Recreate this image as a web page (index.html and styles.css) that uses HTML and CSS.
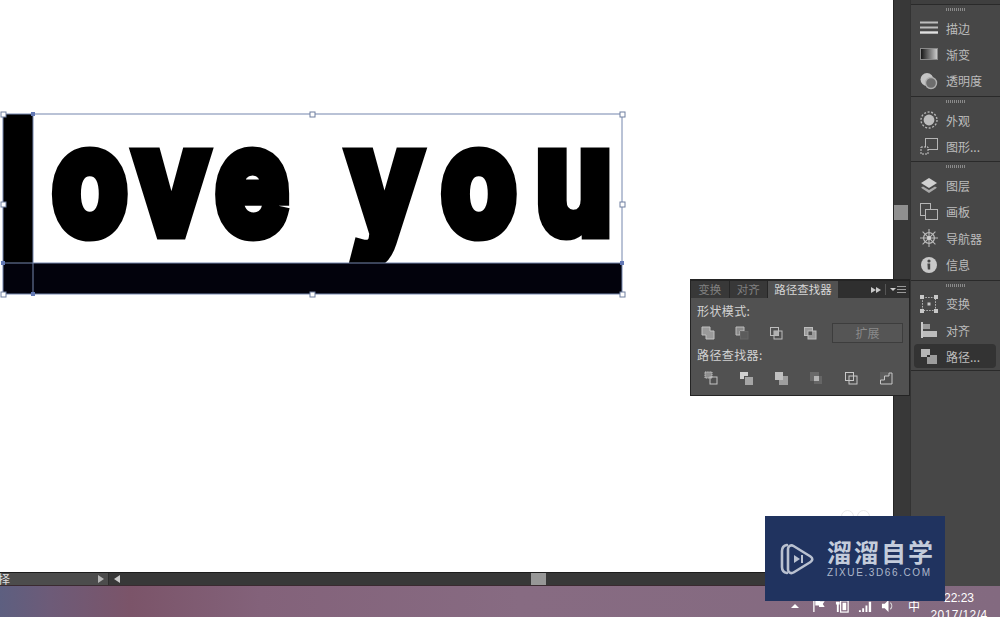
FILE: index.html
```html
<!DOCTYPE html>
<html lang="zh-CN">
<head>
  <meta charset="UTF-8" />
  <meta name="viewport" content="width=device-width, initial-scale=1.0" />
  <title>路径查找器</title>
  <link rel="stylesheet" href="styles.css">
</head>
<body>
  <!-- icon sheet -->
  <svg class="sheet" width="0" height="0">
    <symbol id="i-stroke" viewBox="0 0 18 18"><path d="M0 3.5h18M0 8.5h18" stroke="#bdbdbd" stroke-width="2"/><path d="M0 13.5h18" stroke="#e0e0e0" stroke-width="2.4"/></symbol>
    <linearGradient id="grad"><stop offset="0" stop-color="#111"/><stop offset="1" stop-color="#cfcfcf"/></linearGradient>
    <symbol id="i-gradient" viewBox="0 0 18 18"><rect x=".5" y="3.5" width="17" height="11" fill="url(#grad)" stroke="#8a8a8a"/></symbol>
    <symbol id="i-opacity" viewBox="0 0 18 18"><circle cx="7" cy="7.5" r="6.5" fill="#c4c4c4"/><circle cx="11" cy="11" r="5.5" fill="#6e6e6e" stroke="#b0b0b0" stroke-width="1.4"/></symbol>
    <symbol id="i-appearance" viewBox="0 0 18 18"><circle cx="9" cy="9" r="8" fill="none" stroke="#b5b5b5" stroke-width="1.4" stroke-dasharray="2 1.6"/><circle cx="9" cy="9" r="5.4" fill="#bdbdbd"/></symbol>
    <symbol id="i-styles" viewBox="0 0 18 18"><rect x="5.5" y="1.5" width="12" height="11" fill="none" stroke="#b5b5b5"/><rect x="1" y="10" width="7" height="7" fill="#474747" stroke="#c8c8c8" stroke-dasharray="2 1"/></symbol>
    <symbol id="i-layers" viewBox="0 0 18 18"><path d="M9 1l8 5-8 5-8-5z" fill="#d0d0d0"/><path d="M3 9.4L9 13l6-3.6 2 1.4-8 5.2-8-5.2z" fill="#a8a8a8"/></symbol>
    <symbol id="i-artboard" viewBox="0 0 18 18"><rect x=".5" y=".5" width="10" height="12" fill="none" stroke="#b5b5b5"/><rect x="5.5" y="6.5" width="12" height="10" fill="#474747" stroke="#b5b5b5"/></symbol>
    <symbol id="i-nav" viewBox="0 0 18 18"><g fill="none" stroke="#b8b8b8"><circle cx="9" cy="9" r="5.4" stroke-width="1.3"/><path d="M9 0v18M0 9h18M2.6 2.6l12.8 12.8M15.4 2.6L2.6 15.4" stroke-width="1.1"/></g><circle cx="9" cy="9" r="2" fill="#d0d0d0"/></symbol>
    <symbol id="i-info" viewBox="0 0 18 18"><circle cx="9" cy="9" r="8" fill="#c8c8c8"/><circle cx="9" cy="5" r="1.6" fill="#474747"/><path d="M7.4 7.6h2.8v6h-2.4" fill="#474747"/></symbol>
    <symbol id="i-transform" viewBox="0 0 18 18"><rect x="2.5" y="2.5" width="13" height="13" fill="none" stroke="#b5b5b5" stroke-dasharray="1.6 1.2"/><path d="M0 0h4v4H0zM14 0h4v4h-4zM0 14h4v4H0zM14 14h4v4h-4z" fill="#c8c8c8"/><rect x="7.5" y="7.5" width="3" height="3" fill="#c8c8c8"/></symbol>
    <symbol id="i-align" viewBox="0 0 18 18"><rect x="1" y="1" width="2" height="16" fill="#c8c8c8"/><rect x="3" y="3" width="7" height="5" fill="#9a9a9a"/><rect x="3" y="10" width="14" height="6" fill="#bdbdbd"/></symbol>
    <symbol id="i-path" viewBox="0 0 18 18"><rect x="1" y="2" width="9" height="8" fill="#b5b5b5"/><rect x="7" y="8" width="10" height="9" fill="#9c9c9c"/><rect x="7" y="8" width="3" height="2" fill="#2e2e2e"/></symbol>

    <symbol id="p-unite" viewBox="0 0 14 14"><path d="M1 1h8v4h4v8H5V9H1z" fill="#9a9a9a" stroke="#c2c2c2"/></symbol>
    <symbol id="p-minus" viewBox="0 0 14 14"><path d="M1 1h8v4H5v4H1z" fill="#8a8a8a" stroke="#bdbdbd"/><rect x="5.5" y="5.5" width="7.5" height="7.5" fill="#5c5c5c" stroke="#666"/></symbol>
    <symbol id="p-intersect" viewBox="0 0 14 14"><rect x="1.5" y="1.5" width="8" height="8" fill="none" stroke="#bdbdbd"/><rect x="5" y="5" width="8" height="8" fill="none" stroke="#bdbdbd"/><rect x="5" y="5" width="4.5" height="4.5" fill="#b0b0b0"/></symbol>
    <symbol id="p-exclude" viewBox="0 0 14 14"><rect x="1.5" y="1.5" width="8" height="8" fill="#9a9a9a" stroke="#bdbdbd"/><rect x="5" y="5" width="8" height="8" fill="#9a9a9a" stroke="#bdbdbd"/><rect x="5.5" y="5.5" width="3.5" height="3.5" fill="#515151"/></symbol>
    <symbol id="p-divide" viewBox="0 0 14 14"><rect x="1" y="1" width="7" height="6" fill="#8f8f8f" stroke="#c4c4c4" stroke-dasharray="1.5 .7"/><rect x="6" y="6" width="7" height="7" fill="none" stroke="#c4c4c4"/></symbol>
    <symbol id="p-trim" viewBox="0 0 14 14"><path d="M1 1h8v4H5v3H1z" fill="#d0d0d0"/><rect x="6" y="6" width="8" height="8" fill="#a5a5a5"/></symbol>
    <symbol id="p-merge" viewBox="0 0 14 14"><rect x="1" y="1" width="8" height="8" fill="#c0c0c0"/><path d="M9 5h5v9H5V9h4z" fill="#9e9e9e"/></symbol>
    <symbol id="p-crop" viewBox="0 0 14 14"><rect x="1" y="1" width="9" height="9" fill="#6a6a6a"/><rect x="5" y="5" width="8" height="8" fill="#666"/><rect x="5" y="5" width="5" height="5" fill="#b5b5b5"/></symbol>
    <symbol id="p-outline" viewBox="0 0 14 14"><rect x="1.5" y="1.5" width="8" height="8" fill="none" stroke="#c8c8c8"/><rect x="5" y="5" width="8" height="8" fill="none" stroke="#c8c8c8"/></symbol>
    <symbol id="p-back" viewBox="0 0 14 14"><path d="M1 1h9v4H5v4H1z" fill="#5e5e5e"/><path d="M10 2v3H5.500v4H1.500v4H13V2z" fill="none" stroke="#c8c8c8"/></symbol>
  </svg>

  <div class="workspace">
    <div class="doc">
      <div class="canvas">
        <svg class="artwork" width="640" height="310" viewBox="0 0 640 310">
          <g transform="scale(.84 1)">
            <text class="word" x="21 107 204 300 400 458 570 683" y="233.5"><tspan class="word-l">l</tspan>ove you</text>
          </g>
          <rect x="3" y="114" width="30" height="150" fill="#000"/>
          <rect x="3" y="263" width="619" height="31" fill="#02020c"/>
          <g class="sel">
            <rect x="3" y="114" width="619" height="180"/>
            <path d="M33 114v180M3 263h619"/>
          </g>
          <g class="handle">
            <rect x="1" y="112" width="5" height="5"/><rect x="310" y="112" width="5" height="5"/><rect x="620" y="112" width="5" height="5"/>
            <rect x="1" y="202" width="5" height="5"/><rect x="620" y="202" width="5" height="5"/>
            <rect x="1" y="292" width="5" height="5"/><rect x="310" y="292" width="5" height="5"/><rect x="620" y="292" width="5" height="5"/>
          </g>
          <g class="anchor">
            <rect x="31" y="112" width="4" height="4"/><rect x="31" y="292" width="4" height="4"/>
            <rect x="1" y="261" width="4" height="4"/><rect x="620" y="261" width="4" height="4"/>
          </g>
        </svg>
        <div class="ghost"><i></i><i></i></div>
      </div>
      <div class="statusbar">
        <div class="status-label"><span>择</span><i class="tri tri-r"></i></div>
        <i class="tri tri-l"></i>
        <div class="hscroll"><div class="hthumb"></div></div>
      </div>
    </div>

    <div class="dock">
      <div class="vscroll"><div class="vthumb"></div></div>
      <div class="dock-panels">
        <div class="dock-cap"></div>
        <div class="group">
          <div class="grip"></div>
          <div class="row"><svg><use href="#i-stroke"/></svg>描边</div>
          <div class="row"><svg><use href="#i-gradient"/></svg>渐变</div>
          <div class="row"><svg><use href="#i-opacity"/></svg>透明度</div>
        </div>
        <div class="group">
          <div class="grip"></div>
          <div class="row"><svg><use href="#i-appearance"/></svg>外观</div>
          <div class="row"><svg><use href="#i-styles"/></svg>图形...</div>
        </div>
        <div class="group">
          <div class="grip"></div>
          <div class="row"><svg><use href="#i-layers"/></svg>图层</div>
          <div class="row"><svg><use href="#i-artboard"/></svg>画板</div>
          <div class="row"><svg><use href="#i-nav"/></svg>导航器</div>
          <div class="row"><svg><use href="#i-info"/></svg>信息</div>
        </div>
        <div class="group">
          <div class="grip"></div>
          <div class="row"><svg><use href="#i-transform"/></svg>变换</div>
          <div class="row"><svg><use href="#i-align"/></svg>对齐</div>
          <div class="row row-active"><svg><use href="#i-path"/></svg>路径...</div>
        </div>
      </div>
    </div>
  </div>

  <div class="taskbar">
    <div class="tray">
      <i class="tri tri-up"></i>
      <svg class="tray-icon" viewBox="0 0 16 16"><path d="M2 1v14" stroke="#fff" stroke-width="1.4"/><path d="M3.500 2h5v1.500h5l-2 3 2 3h-6V8h-4z" fill="#fff"/></svg>
      <svg class="tray-icon" viewBox="0 0 16 16"><rect x="6" y="3" width="8" height="12" fill="none" stroke="#fff" stroke-width="1.3"/><rect x="8" y="5" width="4" height="8" fill="#fff"/><path d="M1 4h4v3H4v8H2V7H1z" fill="#fff"/></svg>
      <svg class="tray-icon" viewBox="0 0 16 16"><path d="M1 13h2v2H1zM4.500 11h2v4h-2zM8 8h2v7H8zM11.500 4h2.500v11h-2.500z" fill="#fff"/></svg>
      <svg class="tray-icon" viewBox="0 0 16 16"><path d="M1 6h3l4-4v13l-4-4H1z" fill="#fff"/><path d="M10 5c2 2 2 5 0 7" fill="none" stroke="#ddd" stroke-width="1.2"/></svg>
      <span class="ime">中</span>
    </div>
    <div class="clock"><span>22:23</span><span class="date">2017/12/4</span></div>
  </div>

  <!-- floating pathfinder panel -->
  <div class="pathfinder">
    <div class="tabs">
      <span class="tab">变换</span>
      <span class="tab">对齐</span>
      <span class="tab tab-active">路径查找器</span>
      <span class="tabs-end"><i class="dbl"></i><i class="dbl"></i><b class="tabs-sep"></b><i class="tri tri-menu"></i><i class="menu-lines"></i></span>
    </div>
    <div class="pf-body">
      <div class="pf-title">形状模式:</div>
      <div class="pf-shapes">
        <svg class="pf-icon"><use href="#p-unite"/></svg>
        <svg class="pf-icon"><use href="#p-minus"/></svg>
        <svg class="pf-icon"><use href="#p-intersect"/></svg>
        <svg class="pf-icon"><use href="#p-exclude"/></svg>
        <div class="expand">扩展</div>
      </div>
      <div class="pf-title">路径查找器:</div>
      <div class="pf-finders">
        <svg class="pf-icon"><use href="#p-divide"/></svg>
        <svg class="pf-icon"><use href="#p-trim"/></svg>
        <svg class="pf-icon"><use href="#p-merge"/></svg>
        <svg class="pf-icon"><use href="#p-crop"/></svg>
        <svg class="pf-icon"><use href="#p-outline"/></svg>
        <svg class="pf-icon"><use href="#p-back"/></svg>
      </div>
    </div>
  </div>

  <!-- watermark -->
  <div class="watermark">
    <svg class="wm-logo" viewBox="0 0 36 36">
      <path d="M8 4c-3 .5-5 2.500-5 6v16c0 3.500 2 5.500 5 6" fill="none" stroke="#b9c1d0" stroke-width="2.600" stroke-linecap="round"/>
      <path d="M9 8c0-3 3-4.500 5.500-3l17 10.500c2.400 1.600 2.400 4 0 5.500l-17 10.500c-2.500 1.500-5.500 0-5.500-3z" fill="none" stroke="#b9c1d0" stroke-width="2.600"/>
      <path d="M15 14v8l6-4z M22 14h2v8h-2z" fill="#b9c1d0"/>
    </svg>
    <div class="wm-text">
      <div class="wm-name">溜溜自学</div>
      <div class="wm-url">ZIXUE.3D66.COM</div>
    </div>
  </div>
</body>
</html>
```

FILE: styles.css
```css
* { box-sizing: border-box; }
body {
  margin: 0;
  width: 1000px;
  height: 617px;
  overflow: hidden;
  position: relative;
  display: flex;
  flex-direction: column;
  background: #fff;
  font-family: "Noto Sans CJK SC", "Liberation Sans", sans-serif;
}
.sheet { position: absolute; }

.workspace {
  display: flex;
  height: 586px;
}
.doc {
  width: 893px;
  display: flex;
  flex-direction: column;
}
.canvas {
  flex: 1;
  position: relative;
  background: #fff;
}
.artwork {
  position: absolute;
  top: 0;
  left: 0;
}
.word {
  font-family: Inter, sans-serif;
  font-weight: 700;
  font-size: 145px;
  text-anchor: middle;
  fill: #000;
  stroke: #000;
  stroke-width: 13px;
}
.word-l {
  stroke-width: 0;
}
.sel rect, .sel path {
  fill: none;
  stroke: #7486ad;
  stroke-width: 1;
}
.handle rect {
  fill: #fff;
  stroke: #6f7f9f;
  stroke-width: 1;
}
.anchor rect { fill: #6278b4; }
.ghost {
  position: absolute;
  left: 841px;
  top: 510px;
  display: flex;
  gap: 3px;
}
.ghost i {
  display: block;
  width: 13px;
  height: 13px;
  border: 1px solid #e9e9e9;
  border-radius: 50%;
}

/* bottom status strip */
.statusbar {
  height: 14px;
  display: flex;
  align-items: center;
  background: #383838;
  border-top: 1px solid #1d1d1d;
  border-bottom: 1px solid #3a2a30;
}
.status-label {
  width: 109px;
  height: 100%;
  display: flex;
  align-items: center;
  justify-content: space-between;
  padding-right: 4px;
  background: #4c4c4c;
  border-right: 1px solid #2d2d2d;
  color: #ddd;
  font-size: 12px;
  line-height: 12px;
}
.status-label span { margin-left: -2px; }
.tri {
  display: block;
  width: 0;
  height: 0;
  border-style: solid;
  border-color: transparent;
}
.tri-r { border-width: 4px 0 4px 6px; border-left-color: #b5b5b5; }
.tri-l { border-width: 4px 6px 4px 0; border-right-color: #ccc; margin: 0 5px 0 5px; }
.tri-up { border-width: 0 4px 4px; border-bottom-color: #fff; margin-right: 5px; }
.hscroll {
  flex: 1;
  height: 100%;
  padding-left: 406px;
}
.hthumb {
  width: 15px;
  height: 100%;
  background: #979797;
}

/* right dock */
.dock {
  width: 107px;
  display: flex;
  background: #383838;
  border-left: 1px solid #262626;
}
.vscroll {
  width: 15px;
  padding-top: 205px;
}
.vthumb {
  width: 14px;
  height: 15px;
  background: #8f8f8f;
}
.dock-panels {
  flex: 1;
  margin-left: 1px;
  background: #474747;
  border-left: 1px solid #333;
}
.dock-cap { height: 5px; background: #3f3f3f; border-bottom: 1px solid #2a2a2a; }
.group {
  padding-bottom: 2px;
  border-bottom: 1px solid #2a2a2a;
}
.grip {
  height: 10px;
  margin: 0 auto;
  width: 20px;
  background: repeating-linear-gradient(90deg, #8a8a8a 0 1px, transparent 1px 2px) center 3px / 20px 3px no-repeat;
}
.row {
  height: 26.3px;
  display: flex;
  align-items: center;
  gap: 8px;
  padding-left: 9px;
  color: #bcbcbc;
  font-size: 12px;
}
.row svg {
  width: 18px;
  height: 18px;
  flex: none;
}
.row-active {
  margin: 1px 4px 0 3px;
  padding-left: 6px;
  height: 24px;
  background: #333;
  border-radius: 4px;
}

/* taskbar */
.taskbar {
  height: 31px;
  display: flex;
  justify-content: flex-end;
  background: linear-gradient(90deg, #5d5f80 0, #6d5b78 50px, #7b5469 130px, #83627a 260px, #876b82 520px, #836a80 1000px);
  color: #fff;
}
.tray {
  display: flex;
  align-items: center;
  gap: 8px;
  height: 100%;
  padding-top: 8px;
  margin-right: 6px;
}
.tray-icon { width: 15px; height: 15px; }
.ime { font-size: 12px; margin-left: 4px; }
.clock {
  width: 74px;
  display: flex;
  flex-direction: column;
  align-items: center;
  font-family: "Liberation Sans", sans-serif;
  font-size: 12px;
  line-height: 17px;
  padding-top: 4px;
  padding-right: 8px;
  white-space: nowrap;
}
.date { letter-spacing: .4px; }

/* floating panel */
.pathfinder {
  position: absolute;
  left: 690px;
  top: 279px;
  width: 220px;
  height: 117px;
  background: #515151;
  border: 1px solid #242424;
  border-top-width: 2px;
  color: #d2d2d2;
  font-size: 12px;
}
.tabs {
  height: 17px;
  display: flex;
  align-items: stretch;
  background: #2f2f2f;
  font-size: 11.500px;
}
.tab {
  width: 38.500px;
  text-align: center;
  line-height: 17px;
  color: #808080;
  border-right: 1px solid #262626;
  background: #383838;
}
.tab-active {
  width: 70px;
  background: #515151;
  color: #d6d6d6;
  border: 0;
}
.tabs-end {
  margin-left: auto;
  display: flex;
  align-items: center;
  padding-right: 3px;
}
.dbl {
  display: block;
  width: 0;
  height: 0;
  border-style: solid;
  border-color: transparent;
  border-width: 3.500px 0 3.500px 5px;
  border-left-color: #c8c8c8;
}
.tabs-sep {
  width: 1px;
  height: 11px;
  background: #555;
  margin: 0 4px;
}
.tri-menu { border-width: 3px 3px 0; border-top-color: #ccc; margin-right: 1px; }
.menu-lines {
  display: block;
  width: 9px;
  height: 7px;
  background: repeating-linear-gradient(#999 0 1px, transparent 1px 3px);
}
.pf-body { padding: 3px 6px 0; }
.pf-title { height: 20px; line-height: 20px; letter-spacing: .4px; }
.pf-shapes {
  display: flex;
  align-items: center;
  height: 24px;
  padding-left: 4px;
  gap: 20px;
}
.pf-finders {
  display: flex;
  align-items: center;
  height: 26px;
  padding-left: 7px;
  gap: 21px;
}
.pf-icon { width: 14px; height: 14px; flex: none; }
.expand {
  margin-left: -5px;
  width: 71px;
  height: 20px;
  line-height: 18px;
  text-align: center;
  background: #555;
  border: 1px solid #3d3d3d;
  color: #8a8a8a;
}

/* watermark */
.watermark {
  position: absolute;
  left: 765px;
  top: 516px;
  width: 180px;
  height: 85px;
  display: flex;
  align-items: center;
  gap: 12px;
  padding-left: 14px;
  background: #20335f;
}
.wm-logo { width: 36px; height: 36px; flex: none; }
.wm-name {
  font-size: 25px;
  line-height: 29px;
  font-weight: 700;
  letter-spacing: 2px;
  color: #c4ccdb;
  white-space: nowrap;
}
.wm-url {
  font-family: "Liberation Sans", sans-serif;
  font-size: 10px;
  line-height: 14px;
  letter-spacing: 1.600px;
  color: #aeb8cb;
  white-space: nowrap;
}
```
